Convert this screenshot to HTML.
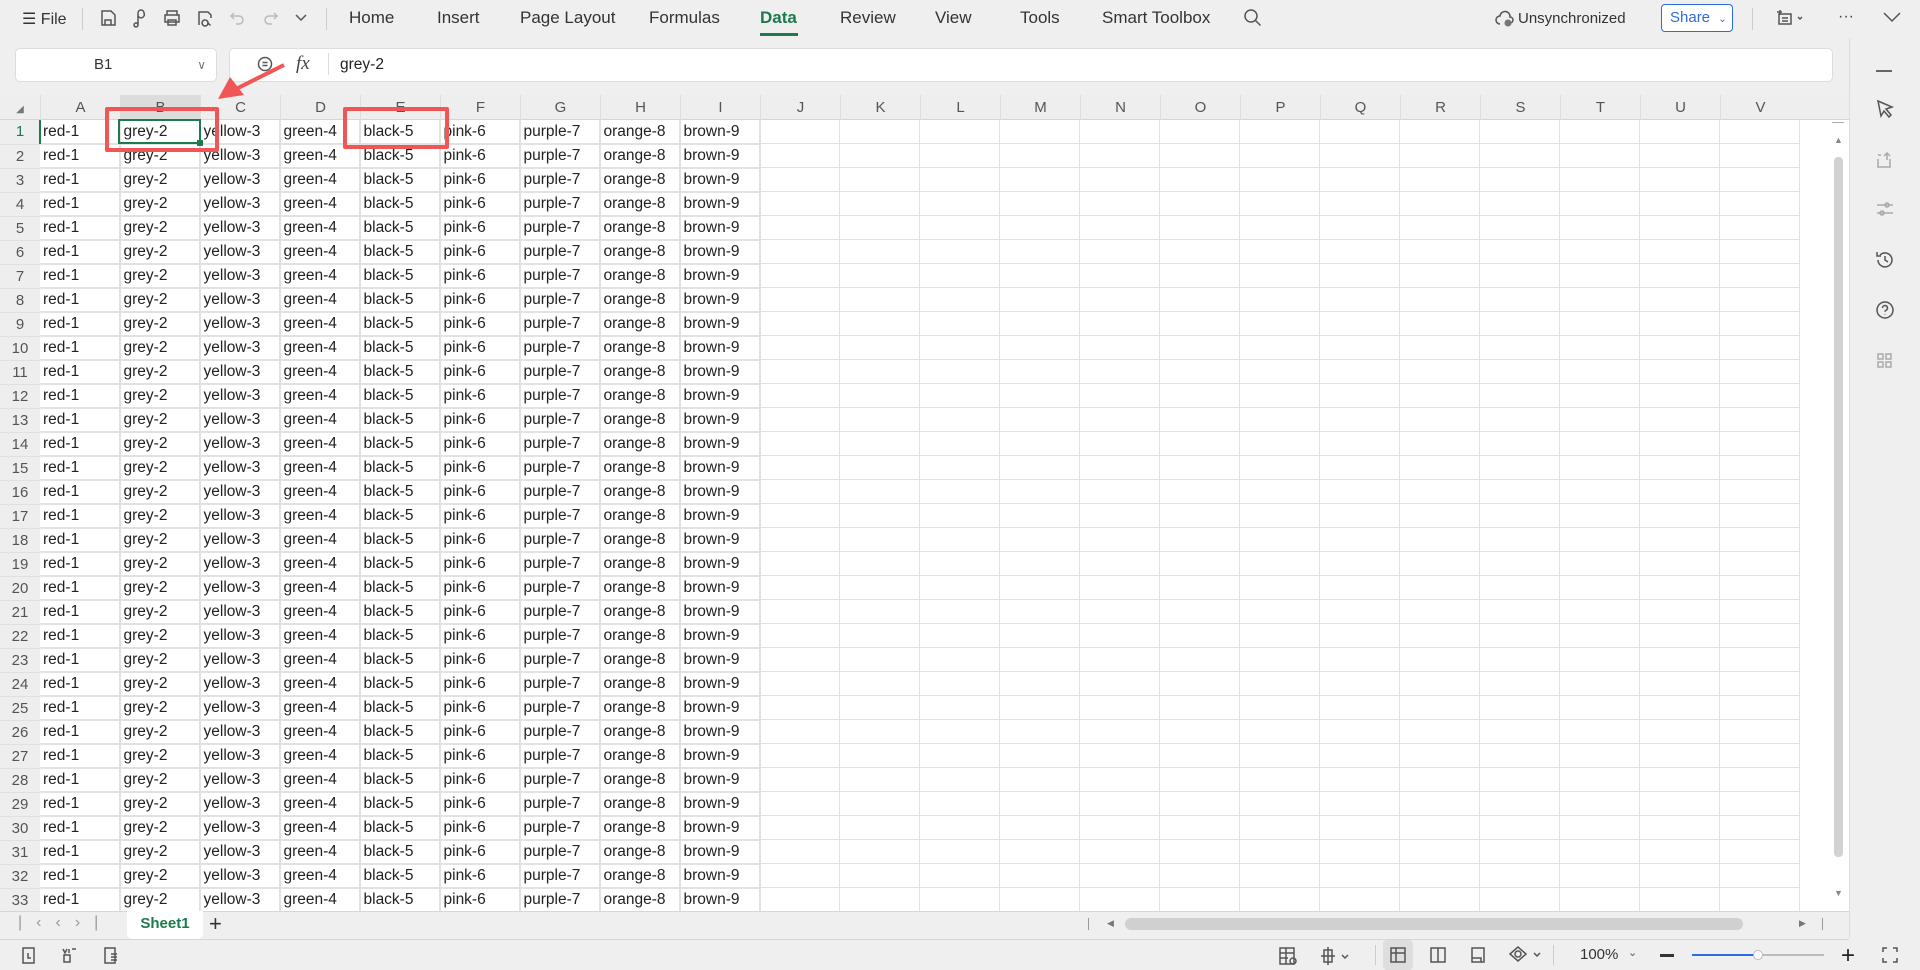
<!DOCTYPE html>
<html><head><meta charset="utf-8"><style>
*{box-sizing:border-box;margin:0;padding:0}
body{width:1920px;height:970px;overflow:hidden;background:#efefef;font-family:"Liberation Sans",sans-serif;color:#222;position:relative}
.abs{position:absolute}
.tab{position:absolute;top:8px;font-size:17px;color:#333}
.ic{position:absolute;stroke:#555;fill:none;stroke-width:1.5}
#grid{position:absolute;left:0;top:95px;width:1849px;height:816px;background:#fff;overflow:hidden}
#cols{position:absolute;left:0;top:0;height:25px;width:1849px;background:#eeeeee;border-bottom:1px solid #d6d6d6}
#cols div{position:absolute;top:0;width:80px;height:25px;line-height:25px;text-align:center;font-size:15px;color:#555;border-left:1px solid #ddd}
#body{position:absolute;left:40px;top:25px;width:1760px;height:800px;background-image:linear-gradient(to right,#e2e2e2 1px,transparent 1px),linear-gradient(to bottom,#e2e2e2 1px,transparent 1px);background-size:80px 24px,80px 24px;background-position:79px 0,0 23px}
table{position:absolute;left:0;top:25px;border-collapse:collapse;font-size:15.5px}
td,th{height:24px;padding:0 0 0 3px;white-space:nowrap;overflow:hidden;text-align:left;font-weight:normal}
th{width:40px;background:#eeeeee;color:#555;text-align:center;padding:0;font-size:15px;border-bottom:1px solid #e0e0e0}
td{width:80px;max-width:80px;border-right:1px solid #e2e2e2;border-bottom:1px solid #e2e2e2;color:#222}
</style></head><body>
<div class="abs" style="left:22px;top:9px;font-size:16px;color:#333">☰ File</div>
<div class="abs" style="left:82px;top:8px;width:1px;height:22px;background:#ccc"></div>
<svg class="ic" style="left:98px;top:8px" width="20" height="20"><path d="M4 3h9l4 4v10H4z M7 12h6v5H7z"/></svg>
<svg class="ic" style="left:130px;top:8px" width="20" height="20"><path d="M8 17V5a3 3 0 0 1 6 0 3 3 0 0 1-6 3M8 17a2 2 0 1 1 0-.1"/></svg>
<svg class="ic" style="left:162px;top:8px" width="20" height="20"><path d="M5 7V3h10v4M3 7h14v7H3zM6 12h8v5H6z"/></svg>
<svg class="ic" style="left:195px;top:8px" width="22" height="20"><path d="M4 17V4h9l3 3v3M10 12a3 3 0 1 0 .1 0M12.5 14.5l3 3"/></svg>
<svg class="ic" style="left:228px;top:8px;stroke:#bbb" width="20" height="20"><path d="M6 5l-3 3 3 3M3 8h8a4 4 0 0 1 0 8H8"/></svg>
<svg class="ic" style="left:260px;top:8px;stroke:#bbb" width="20" height="20"><path d="M14 5l3 3-3 3M17 8H9a4 4 0 0 0 0 8h3"/></svg>
<svg class="ic" style="left:293px;top:10px" width="16" height="16"><path d="M3 5l5 5 5-5"/></svg>
<div class="abs" style="left:326px;top:8px;width:1px;height:22px;background:#ccc"></div>
<div class="tab" style="left:349px">Home</div>
<div class="tab" style="left:437px">Insert</div>
<div class="tab" style="left:520px">Page Layout</div>
<div class="tab" style="left:649px">Formulas</div>
<div class="tab" style="left:760px;color:#1d7a4c;font-weight:bold">Data</div>
<div class="abs" style="left:760px;top:33px;width:38px;height:3px;background:#1d7a4c"></div>
<div class="tab" style="left:840px">Review</div>
<div class="tab" style="left:935px">View</div>
<div class="tab" style="left:1020px">Tools</div>
<div class="tab" style="left:1102px">Smart Toolbox</div>
<svg class="ic" style="left:1243px;top:8px" width="20" height="20"><circle cx="8" cy="8" r="6"/><path d="M12.5 12.5l5 5"/></svg>
<svg class="ic" style="left:1494px;top:9px" width="22" height="20"><path d="M6 15a4 4 0 0 1 0-8 5 5 0 0 1 10 1 3 3 0 0 1 0 6"/><circle cx="14" cy="14" r="3.5" fill="#777" stroke="none"/></svg>
<div class="abs" style="left:1518px;top:10px;font-size:15px;color:#333">Unsynchronized</div>
<div class="abs" style="left:1661px;top:4px;width:72px;height:28px;border:1px solid #2b6ce0;border-radius:4px;background:#fff;color:#2b6ce0;font-size:15px;line-height:26px;padding-left:8px">Share <span style="font-size:10px;margin-left:4px">⌄</span></div>
<div class="abs" style="left:1752px;top:8px;width:1px;height:22px;background:#ccc"></div>
<svg class="ic" style="left:1776px;top:8px" width="30" height="20"><path d="M3 6h12v10H3zM6 10h6M6 13h6M4 2v5M1 4h5M22 9l2 2 2-2"/></svg>
<div class="abs" style="left:1838px;top:8px;font-size:16px;color:#444">···</div>
<svg class="ic" style="left:1882px;top:9px" width="20" height="16"><path d="M2 4l8 8 8-8"/></svg>
<div class="abs" style="left:15px;top:48px;width:202px;height:34px;background:#fff;border:1px solid #ddd;border-radius:5px;font-size:15px;line-height:32px;padding-left:78px;color:#333">B1<span style="position:absolute;right:10px;color:#777;font-size:12px">∨</span></div>
<div class="abs" style="left:229px;top:48px;width:1604px;height:34px;background:#fff;border:1px solid #ddd;border-radius:5px"></div>
<svg class="ic" style="left:256px;top:55px" width="20" height="20"><circle cx="9" cy="9" r="6.5"/><path d="M6.5 7.5h5M6.5 10.5h5"/></svg>
<div class="abs" style="left:296px;top:53px;font-family:'Liberation Serif',serif;font-style:italic;font-size:19px;color:#444">fx</div>
<div class="abs" style="left:328px;top:53px;width:1px;height:22px;background:#ddd"></div>
<div class="abs" style="left:340px;top:56px;font-size:15.5px;color:#222">grey-2</div>
<div id="grid">
<div id="cols">
<div style="left:0;width:40px;border:none"><span style="font-size:10px;color:#777">◢</span></div>
<div style="left:40px">A</div><div style="left:120px;background:#dcdcdc">B</div><div style="left:200px">C</div><div style="left:280px">D</div><div style="left:360px">E</div><div style="left:440px">F</div><div style="left:520px">G</div><div style="left:600px">H</div><div style="left:680px">I</div><div style="left:760px">J</div><div style="left:840px">K</div><div style="left:920px">L</div><div style="left:1000px">M</div><div style="left:1080px">N</div><div style="left:1160px">O</div><div style="left:1240px">P</div><div style="left:1320px">Q</div><div style="left:1400px">R</div><div style="left:1480px">S</div><div style="left:1560px">T</div><div style="left:1640px">U</div><div style="left:1720px">V</div>
</div>
<div id="body"></div>
<div class="abs" style="left:0;top:25px;width:40px;height:800px;background:#eeeeee"></div>
<table>
<tr><th style="color:#1d7a4c">1</th><td>red-1</td><td>grey-2</td><td>yellow-3</td><td>green-4</td><td>black-5</td><td>pink-6</td><td>purple-7</td><td>orange-8</td><td>brown-9</td></tr>
<tr><th>2</th><td>red-1</td><td>grey-2</td><td>yellow-3</td><td>green-4</td><td>black-5</td><td>pink-6</td><td>purple-7</td><td>orange-8</td><td>brown-9</td></tr>
<tr><th>3</th><td>red-1</td><td>grey-2</td><td>yellow-3</td><td>green-4</td><td>black-5</td><td>pink-6</td><td>purple-7</td><td>orange-8</td><td>brown-9</td></tr>
<tr><th>4</th><td>red-1</td><td>grey-2</td><td>yellow-3</td><td>green-4</td><td>black-5</td><td>pink-6</td><td>purple-7</td><td>orange-8</td><td>brown-9</td></tr>
<tr><th>5</th><td>red-1</td><td>grey-2</td><td>yellow-3</td><td>green-4</td><td>black-5</td><td>pink-6</td><td>purple-7</td><td>orange-8</td><td>brown-9</td></tr>
<tr><th>6</th><td>red-1</td><td>grey-2</td><td>yellow-3</td><td>green-4</td><td>black-5</td><td>pink-6</td><td>purple-7</td><td>orange-8</td><td>brown-9</td></tr>
<tr><th>7</th><td>red-1</td><td>grey-2</td><td>yellow-3</td><td>green-4</td><td>black-5</td><td>pink-6</td><td>purple-7</td><td>orange-8</td><td>brown-9</td></tr>
<tr><th>8</th><td>red-1</td><td>grey-2</td><td>yellow-3</td><td>green-4</td><td>black-5</td><td>pink-6</td><td>purple-7</td><td>orange-8</td><td>brown-9</td></tr>
<tr><th>9</th><td>red-1</td><td>grey-2</td><td>yellow-3</td><td>green-4</td><td>black-5</td><td>pink-6</td><td>purple-7</td><td>orange-8</td><td>brown-9</td></tr>
<tr><th>10</th><td>red-1</td><td>grey-2</td><td>yellow-3</td><td>green-4</td><td>black-5</td><td>pink-6</td><td>purple-7</td><td>orange-8</td><td>brown-9</td></tr>
<tr><th>11</th><td>red-1</td><td>grey-2</td><td>yellow-3</td><td>green-4</td><td>black-5</td><td>pink-6</td><td>purple-7</td><td>orange-8</td><td>brown-9</td></tr>
<tr><th>12</th><td>red-1</td><td>grey-2</td><td>yellow-3</td><td>green-4</td><td>black-5</td><td>pink-6</td><td>purple-7</td><td>orange-8</td><td>brown-9</td></tr>
<tr><th>13</th><td>red-1</td><td>grey-2</td><td>yellow-3</td><td>green-4</td><td>black-5</td><td>pink-6</td><td>purple-7</td><td>orange-8</td><td>brown-9</td></tr>
<tr><th>14</th><td>red-1</td><td>grey-2</td><td>yellow-3</td><td>green-4</td><td>black-5</td><td>pink-6</td><td>purple-7</td><td>orange-8</td><td>brown-9</td></tr>
<tr><th>15</th><td>red-1</td><td>grey-2</td><td>yellow-3</td><td>green-4</td><td>black-5</td><td>pink-6</td><td>purple-7</td><td>orange-8</td><td>brown-9</td></tr>
<tr><th>16</th><td>red-1</td><td>grey-2</td><td>yellow-3</td><td>green-4</td><td>black-5</td><td>pink-6</td><td>purple-7</td><td>orange-8</td><td>brown-9</td></tr>
<tr><th>17</th><td>red-1</td><td>grey-2</td><td>yellow-3</td><td>green-4</td><td>black-5</td><td>pink-6</td><td>purple-7</td><td>orange-8</td><td>brown-9</td></tr>
<tr><th>18</th><td>red-1</td><td>grey-2</td><td>yellow-3</td><td>green-4</td><td>black-5</td><td>pink-6</td><td>purple-7</td><td>orange-8</td><td>brown-9</td></tr>
<tr><th>19</th><td>red-1</td><td>grey-2</td><td>yellow-3</td><td>green-4</td><td>black-5</td><td>pink-6</td><td>purple-7</td><td>orange-8</td><td>brown-9</td></tr>
<tr><th>20</th><td>red-1</td><td>grey-2</td><td>yellow-3</td><td>green-4</td><td>black-5</td><td>pink-6</td><td>purple-7</td><td>orange-8</td><td>brown-9</td></tr>
<tr><th>21</th><td>red-1</td><td>grey-2</td><td>yellow-3</td><td>green-4</td><td>black-5</td><td>pink-6</td><td>purple-7</td><td>orange-8</td><td>brown-9</td></tr>
<tr><th>22</th><td>red-1</td><td>grey-2</td><td>yellow-3</td><td>green-4</td><td>black-5</td><td>pink-6</td><td>purple-7</td><td>orange-8</td><td>brown-9</td></tr>
<tr><th>23</th><td>red-1</td><td>grey-2</td><td>yellow-3</td><td>green-4</td><td>black-5</td><td>pink-6</td><td>purple-7</td><td>orange-8</td><td>brown-9</td></tr>
<tr><th>24</th><td>red-1</td><td>grey-2</td><td>yellow-3</td><td>green-4</td><td>black-5</td><td>pink-6</td><td>purple-7</td><td>orange-8</td><td>brown-9</td></tr>
<tr><th>25</th><td>red-1</td><td>grey-2</td><td>yellow-3</td><td>green-4</td><td>black-5</td><td>pink-6</td><td>purple-7</td><td>orange-8</td><td>brown-9</td></tr>
<tr><th>26</th><td>red-1</td><td>grey-2</td><td>yellow-3</td><td>green-4</td><td>black-5</td><td>pink-6</td><td>purple-7</td><td>orange-8</td><td>brown-9</td></tr>
<tr><th>27</th><td>red-1</td><td>grey-2</td><td>yellow-3</td><td>green-4</td><td>black-5</td><td>pink-6</td><td>purple-7</td><td>orange-8</td><td>brown-9</td></tr>
<tr><th>28</th><td>red-1</td><td>grey-2</td><td>yellow-3</td><td>green-4</td><td>black-5</td><td>pink-6</td><td>purple-7</td><td>orange-8</td><td>brown-9</td></tr>
<tr><th>29</th><td>red-1</td><td>grey-2</td><td>yellow-3</td><td>green-4</td><td>black-5</td><td>pink-6</td><td>purple-7</td><td>orange-8</td><td>brown-9</td></tr>
<tr><th>30</th><td>red-1</td><td>grey-2</td><td>yellow-3</td><td>green-4</td><td>black-5</td><td>pink-6</td><td>purple-7</td><td>orange-8</td><td>brown-9</td></tr>
<tr><th>31</th><td>red-1</td><td>grey-2</td><td>yellow-3</td><td>green-4</td><td>black-5</td><td>pink-6</td><td>purple-7</td><td>orange-8</td><td>brown-9</td></tr>
<tr><th>32</th><td>red-1</td><td>grey-2</td><td>yellow-3</td><td>green-4</td><td>black-5</td><td>pink-6</td><td>purple-7</td><td>orange-8</td><td>brown-9</td></tr>
<tr><th>33</th><td>red-1</td><td>grey-2</td><td>yellow-3</td><td>green-4</td><td>black-5</td><td>pink-6</td><td>purple-7</td><td>orange-8</td><td>brown-9</td></tr>
</table>
<div class="abs" style="left:39px;top:25px;width:2px;height:24px;background:#1d7a4c"></div>
<div class="abs" style="left:118px;top:24px;width:83px;height:25px;border:2px solid #1d7a4c"></div>
<div class="abs" style="left:197px;top:45px;width:6px;height:6px;background:#1d7a4c"></div>
<div class="abs" style="left:1800px;top:25px;width:49px;height:793px;background:#fff"></div>
<div class="abs" style="left:1832px;top:27px;width:12px;height:1px;background:#aaa"></div>
<div class="abs" style="left:1834px;top:40px;font-size:9px;color:#888">▲</div>
<div class="abs" style="left:1834px;top:62px;width:9px;height:700px;border-radius:4px;background:#d2d2d2"></div>
<div class="abs" style="left:1834px;top:793px;font-size:9px;color:#888">▼</div>
</div>
<div class="abs" style="left:1849px;top:38px;width:71px;height:902px;background:#efefef"></div>
<div class="abs" style="left:105px;top:107px;width:114px;height:45px;border:4px solid #f25555;border-radius:2px"></div>
<div class="abs" style="left:343px;top:107px;width:106px;height:42px;border:4px solid #f25555;border-radius:2px"></div>
<svg class="abs" style="left:200px;top:55px" width="100" height="55"><path d="M84 10L36 34" stroke="#f25555" stroke-width="4" fill="none"/><path d="M18 44L30 22L44 40Z" fill="#f25555"/></svg>
<div class="abs" style="left:0;top:911px;width:1849px;height:1px;background:#d6d6d6"></div>
<div class="abs" style="left:18px;top:914px;font-size:16px;color:#999;letter-spacing:14px">|‹‹›|</div>
<div class="abs" style="left:127px;top:911px;width:76px;height:28px;background:#fff;border-radius:0 0 6px 6px;color:#1d7a4c;font-weight:bold;font-size:15px;line-height:26px;text-align:center">Sheet1</div>
<div class="abs" style="left:209px;top:911px;font-size:22px;color:#333">+</div>
<div class="abs" style="left:1088px;top:918px;width:1px;height:12px;background:#999"></div>
<div class="abs" style="left:1107px;top:918px;font-size:9px;color:#777">◀</div>
<div class="abs" style="left:1125px;top:918px;width:618px;height:12px;border-radius:6px;background:#d0d0d0"></div>
<div class="abs" style="left:1799px;top:918px;font-size:9px;color:#777">▶</div>
<div class="abs" style="left:1822px;top:918px;width:1px;height:12px;background:#999"></div>
<div class="abs" style="left:0;top:939px;width:1849px;height:1px;background:#d6d6d6"></div>
<svg class="ic" style="left:20px;top:945px" width="18" height="20"><rect x="3" y="3" width="11" height="15"/><path d="M8 8v5h3"/></svg>
<svg class="ic" style="left:60px;top:945px" width="20" height="20"><path d="M3 4l2 4 2-4M9 4v4M12 4h4M4 10h6v7H4z"/></svg>
<svg class="ic" style="left:101px;top:945px" width="20" height="20"><path d="M4 3h10v15H4zM10 9h6M10 12h6M10 15h6"/></svg>
<svg class="ic" style="left:1277px;top:945px" width="22" height="22"><path d="M3 3h14v16H3zM3 8h14M3 13h8M9 3v16"/><circle cx="16" cy="16" r="3"/></svg>
<svg class="ic" style="left:1318px;top:945px" width="34" height="22"><path d="M6 5h8v12H6zM3 11h14M10 2v18M24 10l3 3 3-3"/></svg>
<div class="abs" style="left:1375px;top:945px;width:1px;height:20px;background:#ccc"></div>
<div class="abs" style="left:1383px;top:940px;width:30px;height:30px;background:#dedede;border-radius:4px"></div>
<svg class="ic" style="left:1388px;top:945px" width="20" height="20"><path d="M3 3h14v14H3zM3 8h14M8 3v14"/></svg>
<svg class="ic" style="left:1428px;top:945px" width="20" height="20"><path d="M3 3h14v14H3zM10 3v14"/></svg>
<svg class="ic" style="left:1468px;top:945px" width="20" height="20"><path d="M4 3h12v14H4zM4 13h9v4"/></svg>
<svg class="ic" style="left:1508px;top:943px" width="36" height="22"><path d="M2 11l8-7 8 7-8 7z"/><circle cx="10" cy="11" r="3"/><path d="M26 10l3 3 3-3"/></svg>
<div class="abs" style="left:1553px;top:945px;width:1px;height:20px;background:#ccc"></div>
<div class="abs" style="left:1580px;top:946px;font-size:15px;color:#333">100%</div>
<div class="abs" style="left:1628px;top:946px;font-size:11px;color:#555">⌄</div>
<div class="abs" style="left:1660px;top:954px;width:14px;height:3px;background:#333"></div>
<div class="abs" style="left:1692px;top:954px;width:66px;height:2px;background:#2b6ce0"></div>
<div class="abs" style="left:1758px;top:954px;width:66px;height:2px;background:#bbb"></div>
<div class="abs" style="left:1753px;top:950px;width:10px;height:10px;border-radius:50%;background:#fff;border:1px solid #bbb"></div>
<div class="abs" style="left:1841px;top:942px;font-size:24px;color:#222">+</div>
<svg class="ic" style="left:1880px;top:945px" width="20" height="20"><path d="M3 7V3h4M13 3h4v4M17 13v4h-4M7 17H3v-4"/></svg>
<div class="abs" style="left:1849px;top:38px;width:1px;height:900px;background:#ddd"></div>
<div class="abs" style="left:1876px;top:70px;width:16px;height:2px;background:#666"></div>
<svg class="ic" style="left:1874px;top:98px" width="22" height="24"><path d="M4 3l14 6-6 2 5 6-2 2-5-6-3 5z"/></svg>
<svg class="ic" style="left:1875px;top:150px;stroke:#aaa" width="20" height="20"><path d="M3 5h3M3 9v8h12v-8M12 3v7M9 6l3-3 3 3"/></svg>
<svg class="ic" style="left:1875px;top:199px;stroke:#aaa" width="20" height="20"><path d="M2 6h16M2 14h16"/><circle cx="12" cy="6" r="2"/><circle cx="7" cy="14" r="2"/></svg>
<svg class="ic" style="left:1874px;top:249px" width="22" height="22"><path d="M4 11a7 7 0 1 0 2-5M3 3v4h4M11 7v4l3 2"/></svg>
<svg class="ic" style="left:1874px;top:299px" width="22" height="22"><circle cx="11" cy="11" r="8"/><path d="M8.5 9a2.5 2.5 0 1 1 3.5 2.3c-.6.3-1 .8-1 1.5M11 15.5v.5"/></svg>
<svg class="ic" style="left:1875px;top:351px;stroke:#aaa" width="20" height="20"><rect x="3" y="3" width="5" height="5"/><rect x="11" y="3" width="5" height="5"/><rect x="3" y="11" width="5" height="5"/><rect x="11" y="11" width="5" height="5"/></svg>
</body></html>
